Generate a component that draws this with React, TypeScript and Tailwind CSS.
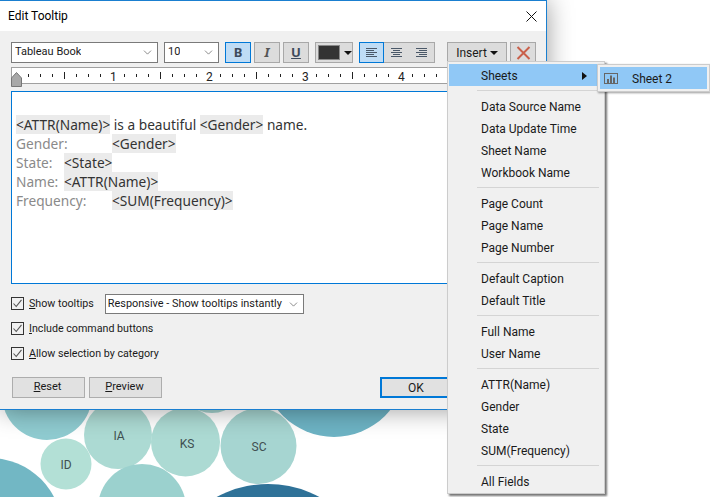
import { ChevronDown } from 'lucide-react';
import type { ReactNode } from 'react';

const circles = [
  { cx: 47, cy: 395, r: 45, fill: '#8fcbd0' },
  { cx: 118, cy: 435, r: 34, fill: '#acdad3' },
  { cx: 185.5, cy: 442, r: 34.5, fill: '#acdad3' },
  { cx: 258.5, cy: 446, r: 38, fill: '#a6d5d1' },
  { cx: 66, cy: 464, r: 25.5, fill: '#b3e0d6' },
  { cx: -10, cy: 530, r: 72, fill: '#72b7c4' },
  { cx: 142, cy: 508, r: 44, fill: '#9bd1ce' },
  { cx: 268, cy: 592, r: 108, fill: '#2f7298' },
  { cx: 334, cy: 365, r: 72, fill: '#6db3c4' },
  { cx: 212, cy: 380, r: 33, fill: '#a6d5d1' },
];

const chartLabels = [
  { x: 119, y: 440, t: 'IA' },
  { x: 187, y: 448, t: 'KS' },
  { x: 259, y: 451, t: 'SC' },
  { x: 66, y: 469, t: 'ID' },
];

function BubbleChart() {
  return (
    <svg className="absolute left-0 top-0" width="710" height="497">
      {circles.map((c, i) => (
        <circle key={i} cx={c.cx} cy={c.cy} r={c.r} fill={c.fill} />
      ))}
      {chartLabels.map((l) => (
        <text key={l.t} x={l.x} y={l.y} textAnchor="middle" fontSize="12" fill="#3f4f50" fontFamily="Roboto, sans-serif">
          {l.t}
        </text>
      ))}
    </svg>
  );
}

function Combo({ label, className }: { label: string; className: string }) {
  return (
    <div className={`h-[21px] bg-white border border-[#7a7a7a] flex items-center justify-between pl-[3px] pr-[3px] text-[11px] ${className}`}>
      <span className="truncate">{label}</span>
      <ChevronDown className="w-[13px] h-[13px] text-[#555] shrink-0" strokeWidth={1.25} />
    </div>
  );
}

function ToolButton({ children, active, className }: { children: ReactNode; active?: boolean; className?: string }) {
  return (
    <div className={`h-[21px] w-[26px] flex items-center justify-center border ${active ? 'bg-[#bfdcf5] border-[#0078d7]' : 'bg-[#dcdcdc] border-[#a8a8a8]'} ${className ?? ''}`}>
      {children}
    </div>
  );
}

function AlignIcon({ kind }: { kind: 'left' | 'center' | 'right' }) {
  const long = 'M2 3.5h11M2 7.5h11M2 11.5h11';
  const short = kind === 'left' ? 'M2 5.5h8M2 9.5h8' : kind === 'center' ? 'M4 5.5h7M4 9.5h7' : 'M5 5.5h8M5 9.5h8';
  return (
    <svg width="15" height="15" viewBox="0 0 15 15" stroke="#4a5868" strokeWidth="1" fill="none">
      <path d={long} />
      <path d={short} />
    </svg>
  );
}

function Ruler() {
  const ticks = [];
  for (let x = 28; x < 440; x += 12) {
    const n = (x - 16) / 12;
    if (n % 8 === 0) continue;
    const half = n % 8 === 4;
    ticks.push(
      <span
        key={x}
        className={`absolute w-px bg-[#222] ${half ? 'top-[4px] h-[7px]' : 'top-[6px] h-[3px]'}`}
        style={{ left: x - 12 }}
      />,
    );
  }
  return (
    <div className="mt-[4px] ml-[11px] mr-[11px] h-[17px] relative bg-white border-t border-l border-b border-[#a0a0a0] shrink-0">
      {ticks}
      {['1', '2', '3', '4'].map((d, i) => (
        <span key={d} className="absolute top-[2px] text-[12px] leading-[14px] text-[#222]" style={{ left: 98 + i * 96 }}>
          {d}
        </span>
      ))}
      <svg className="absolute left-[-1px] top-[4px]" width="12" height="15" viewBox="0 0 12 15">
        <path d="M5.5 0.5 L10.5 6 V14.5 H0.5 V6 Z" fill="#a8a8a8" stroke="#777" />
      </svg>
    </div>
  );
}

function Field({ children }: { children: ReactNode }) {
  return <span className="bg-[#ebebeb] text-[#333]">{children}</span>;
}

function TipRow({ label, width, field }: { label: string; width: number; field: string }) {
  return (
    <div className="flex h-[19px] items-center">
      <span className="text-[#8a8a8a] h-[19px]" style={{ width }}>
        {label}
      </span>
      <Field>{field}</Field>
    </div>
  );
}

function CheckRow({ children }: { children: ReactNode }) {
  return (
    <div className="flex items-center gap-[5px]">
      <div className="w-[13px] h-[13px] border border-[#333] bg-[#f0f0f0] flex items-center justify-center shrink-0">
        <svg width="11" height="11" viewBox="0 0 11 11" fill="none" stroke="#555" strokeWidth="1.1">
          <path d="M1.5 5.5 L4.2 8.5 L9.5 1.8" />
        </svg>
      </div>
      <span className="text-[10.7px]">{children}</span>
    </div>
  );
}

function DialogButton({ children, className }: { children: ReactNode; className?: string }) {
  return (
    <div className={`h-[21px] bg-[#e1e1e1] border border-[#adadad] flex items-center justify-center pr-[2px] ${className ?? ''}`}>
      {children}
    </div>
  );
}

function EditTooltipDialog() {
  return (
    <div className="absolute left-0 top-0 w-[547px] h-[410px] bg-[#f0f0f0] border-t border-r border-b border-[#1a7fd0] shadow-[0_0_24px_rgba(0,0,0,0.4)] flex flex-col">
      <div className="h-[30px] bg-white flex items-center justify-between pl-[8px] pr-[9px] shrink-0">
        <span className="text-[12px] text-black">Edit Tooltip</span>
        <svg width="11" height="11" viewBox="0 0 11 11" stroke="#111" strokeWidth="1" fill="none">
          <path d="M0.5 0.5 L10.5 10.5 M10.5 0.5 L0.5 10.5" />
        </svg>
      </div>

      <div className="flex items-center pl-[11px] pt-[11px] shrink-0">
        <Combo label="Tableau Book" className="w-[147px]" />
        <Combo label="10" className="w-[55px] ml-[6px]" />
        <ToolButton active className="ml-[6px]">
          <span className="font-bold text-[#3c4a5c] text-[13px] font-['Noto_Sans',sans-serif]">B</span>
        </ToolButton>
        <ToolButton className="ml-[3px]">
          <span className="font-bold italic text-[#555] text-[13px] font-['Noto_Sans',sans-serif]">I</span>
        </ToolButton>
        <ToolButton className="ml-[3px]">
          <span className="font-bold underline text-[#3c4a5c] text-[13px] font-['Noto_Sans',sans-serif]">U</span>
        </ToolButton>
        <div className="ml-[6px] w-[38px] h-[21px] bg-[#dcdcdc] border border-[#a8a8a8] flex items-center pl-[2px] gap-[4px]">
          <div className="w-[22px] h-[15px] bg-[#333] border border-[#888]" />
          <svg width="8" height="4" viewBox="0 0 8 4">
            <path d="M0 0 H8 L4 4 Z" fill="#111" />
          </svg>
        </div>
        <div className="ml-[6px] flex h-[21px] border border-[#a8a8a8] bg-[#dcdcdc]">
          <div className="w-[25px] -my-px -ml-px bg-[#bfdcf5] border border-[#0078d7] flex items-center justify-center">
            <AlignIcon kind="left" />
          </div>
          <div className="w-[25px] flex items-center justify-center">
            <AlignIcon kind="center" />
          </div>
          <div className="w-[25px] flex items-center justify-center">
            <AlignIcon kind="right" />
          </div>
        </div>
        <div className="ml-[12px] w-[60px] h-[21px] bg-[#dcdcdc] border border-[#a8a8a8] flex items-center justify-center gap-[3px] text-[12px]">
          Insert
          <svg width="8" height="4" viewBox="0 0 8 4">
            <path d="M0 0 H8 L4 4 Z" fill="#111" />
          </svg>
        </div>
        <div className="ml-[3px] w-[26px] h-[21px] bg-[#dcdcdc] border border-[#a8a8a8] flex items-center justify-center">
          <svg width="15" height="14" viewBox="0 0 15 14" stroke="#c9604a" strokeWidth="2" fill="none">
            <path d="M1.5 1 L13.5 13 M13.5 1 L1.5 13" />
          </svg>
        </div>
      </div>

      <Ruler />

      <div className="mt-[7px] ml-[11px] mr-[11px] h-[193px] bg-white border border-[#0078d7] pl-[4px] pt-[23px] text-[13.7px] leading-[19px] text-[#333] shrink-0 font-['Noto_Sans',sans-serif]">
        <div className="h-[19px]">
          <Field>&lt;ATTR(Name)&gt;</Field> is a beautiful <Field>&lt;Gender&gt;</Field> name.
        </div>
        <TipRow label="Gender:" width={96} field="<Gender>" />
        <TipRow label="State:" width={48} field="<State>" />
        <TipRow label="Name:" width={48} field="<ATTR(Name)>" />
        <TipRow label="Frequency:" width={96} field="<SUM(Frequency)>" />
      </div>

      <div className="ml-[11px] mt-[10px] flex flex-col gap-[5px] shrink-0 text-[11px]">
        <div className="flex items-center h-[20px]">
          <CheckRow>
            <u>S</u>how tooltips
          </CheckRow>
          <div className="ml-[11px] w-[199px] h-[20px] bg-white border border-[#7a7a7a] flex items-center justify-between pl-[2px] pr-[3px]">
            <span className="whitespace-nowrap text-[10.9px]">Responsive - Show tooltips instantly</span>
            <ChevronDown className="w-[13px] h-[13px] text-[#555]" strokeWidth={1.25} />
          </div>
        </div>
        <div className="flex items-center h-[20px]">
          <CheckRow>
            <u>I</u>nclude command buttons
          </CheckRow>
        </div>
        <div className="flex items-center h-[20px]">
          <CheckRow>
            <u>A</u>llow selection by category
          </CheckRow>
        </div>
      </div>

      <div className="flex items-center ml-[12px] mt-[13px] shrink-0 text-[11px]">
        <DialogButton className="w-[73px]">
          <span>
            <u>R</u>eset
          </span>
        </DialogButton>
        <DialogButton className="w-[73px] ml-[4px]">
          <span>
            <u>P</u>review
          </span>
        </DialogButton>
        <div className="ml-[218px] w-[72px] h-[21px] bg-[#e1e1e1] border-2 border-[#0078d7] flex items-center justify-center text-[12px]">OK</div>
      </div>
    </div>
  );
}

const menuGroups = [
  ['Data Source Name', 'Data Update Time', 'Sheet Name', 'Workbook Name'],
  ['Page Count', 'Page Name', 'Page Number'],
  ['Default Caption', 'Default Title'],
  ['Full Name', 'User Name'],
  ['ATTR(Name)', 'Gender', 'State', 'SUM(Frequency)'],
  ['All Fields'],
];

function MenuSeparator() {
  return (
    <div className="h-[9px] flex items-center pl-[28px] pr-[3px]">
      <div className="h-px w-full bg-[#d4d4d4]" />
    </div>
  );
}

function InsertMenu() {
  return (
    <div className="absolute left-[447px] top-[61px] w-[158px] bg-[#f0f0f0] border border-[#ccc] pl-[1px] pr-[2px] pt-[2px] pb-[1px] shadow-[2px_2px_2px_rgba(0,0,0,0.55)]">
      <div className="h-[22px] bg-[#90c8f6] flex items-center justify-between pl-[32px] pr-[15px] pt-[2px]">
        <span>Sheets</span>
        <svg width="5" height="8" viewBox="0 0 5 8">
          <path d="M0 0 L5 4 L0 8 Z" fill="#111" />
        </svg>
      </div>
      {menuGroups.map((group, i) => (
        <div key={i}>
          <MenuSeparator />
          {group.map((item) => (
            <div key={item} className="h-[22px] flex items-center pl-[32px] pt-[2px]">
              {item}
            </div>
          ))}
        </div>
      ))}
    </div>
  );
}

function SheetsSubmenu() {
  return (
    <div className="absolute left-[597px] top-[64px] w-[113px] h-[28px] bg-[#f0f0f0] border border-[#ccc] p-[2px] shadow-[1px_1px_2px_rgba(0,0,0,0.4)]">
      <div className="h-full bg-[#90c8f6] flex items-center pl-[4px]">
        <svg width="14" height="11" viewBox="0 0 14 11" fill="none">
          <rect x="0.5" y="0.5" width="13" height="10" stroke="#666" />
          <path d="M3 6h2v4h-2zM6 2.5h2v7.5h-2zM9 4.5h2v5.5h-2z" fill="#666" />
        </svg>
        <span className="ml-[14px] pt-[2px]">Sheet 2</span>
      </div>
    </div>
  );
}

export default function App() {
  return (
    <div className="relative w-[710px] h-[497px] bg-white overflow-hidden text-[12px] text-[#1a1a1a] font-['Roboto',sans-serif]">
      <BubbleChart />
      <EditTooltipDialog />
      <InsertMenu />
      <SheetsSubmenu />
    </div>
  );
}
